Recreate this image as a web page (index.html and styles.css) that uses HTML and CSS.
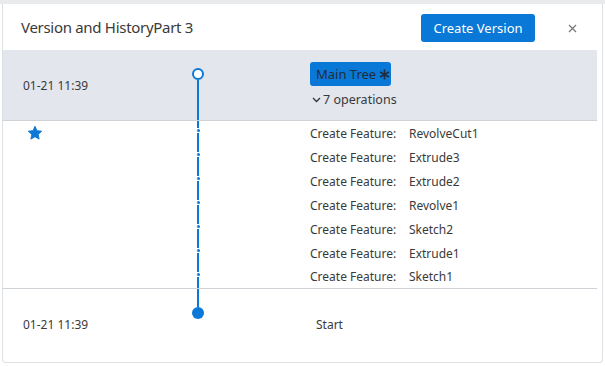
FILE: index.html
```html
<!DOCTYPE html>
<html>
<head>
<meta charset="utf-8">
<link rel="stylesheet" href="styles.css">
</head>
<body>
<div class="card">
  <div class="header">
    <div class="title">Version and HistoryPart 3</div>
    <button class="btn-primary">Create Version</button>
    <span class="close">
      <svg width="9" height="9" viewBox="0 0 9 9"><path d="M1 1L8 8M8 1L1 8" stroke="#777" stroke-width="1.2"/></svg>
    </span>
  </div>
  <div class="body">
    <div class="section current">
      <div class="date">01-21 11:39</div>
      <div class="tl">
        <span class="ring"></span>
        <span class="line"></span>
      </div>
      <div class="content">
        <span class="tag">Main Tree
          <svg class="ast" width="11" height="11" viewBox="0 0 12 12"><path d="M6 0.5V11.5M1.2 3.2L10.8 8.8M10.8 3.2L1.2 8.8" stroke="#1f2d3d" stroke-width="1.8"/></svg>
        </span>
        <div class="ops-toggle">
          <svg width="9" height="6" viewBox="0 0 9 6"><path d="M1 1L4.5 4.5L8 1" fill="none" stroke="#333" stroke-width="1.3"/></svg>
          <span>7 operations</span>
        </div>
      </div>
    </div>
    <div class="section ops">
      <div class="op-row">
        <div class="date star-cell">
          <svg width="14" height="14" viewBox="1 1 22 22"><path d="M12 1.5l3.1 6.9 7.4.8-5.6 5 1.6 7.4L12 17.8l-6.5 3.8 1.6-7.4-5.6-5 7.4-.8z" fill="#0a78d7" stroke="#0a78d7" stroke-width="1.5" stroke-linejoin="round"/></svg>
        </div>
        <div class="tl"><span class="seg top"></span><span class="dot"></span><span class="seg"></span></div>
        <div class="content op"><span class="op-label">Create Feature:</span><span>RevolveCut1</span></div>
      </div>
      <div class="op-row">
        <div class="date"></div>
        <div class="tl"><span class="seg top"></span><span class="dot"></span><span class="seg"></span></div>
        <div class="content op"><span class="op-label">Create Feature:</span><span>Extrude3</span></div>
      </div>
      <div class="op-row">
        <div class="date"></div>
        <div class="tl"><span class="seg top"></span><span class="dot"></span><span class="seg"></span></div>
        <div class="content op"><span class="op-label">Create Feature:</span><span>Extrude2</span></div>
      </div>
      <div class="op-row">
        <div class="date"></div>
        <div class="tl"><span class="seg top"></span><span class="dot"></span><span class="seg"></span></div>
        <div class="content op"><span class="op-label">Create Feature:</span><span>Revolve1</span></div>
      </div>
      <div class="op-row">
        <div class="date"></div>
        <div class="tl"><span class="seg top"></span><span class="dot"></span><span class="seg"></span></div>
        <div class="content op"><span class="op-label">Create Feature:</span><span>Sketch2</span></div>
      </div>
      <div class="op-row">
        <div class="date"></div>
        <div class="tl"><span class="seg top"></span><span class="dot"></span><span class="seg"></span></div>
        <div class="content op"><span class="op-label">Create Feature:</span><span>Extrude1</span></div>
      </div>
      <div class="op-row last">
        <div class="date"></div>
        <div class="tl"><span class="seg top"></span><span class="dot"></span><span class="seg"></span></div>
        <div class="content op"><span class="op-label">Create Feature:</span><span>Sketch1</span></div>
      </div>
    </div>
    <div class="section start">
      <div class="date">01-21 11:39</div>
      <div class="tl">
        <span class="line short"></span>
        <span class="fill-dot"></span>
      </div>
      <div class="content start-text">Start</div>
    </div>
  </div>
</div>
</body>
</html>
```

FILE: styles.css
```css
* { box-sizing: border-box; }
html, body { margin: 0; padding: 0; }
body {
  background: #fff;
  border-top: 4px solid #e9eaec;
  font-family: "Noto Sans", "Open Sans", sans-serif;
  color: #3a3a3a;
  width: 605px;
  height: 366px;
  overflow: hidden;
}
.card {
  margin-left: 2px;
  width: 601px;
  height: 359px;
  border: 1px solid #dcdfe3;
  border-top: none;
  border-radius: 0 0 4px 4px;
  display: flex;
  flex-direction: column;
  padding-right: 5px;
}
.header {
  height: 46px;
  flex: none;
  display: flex;
  align-items: center;
  padding-left: 18px;
}
.title {
  font-size: 15px;
  color: #3a3a3a;
  flex: 1;
  letter-spacing: -0.3px;
}
.btn-primary {
  width: 114px;
  height: 28px;
  background: #0a78d7;
  color: #fff;
  border: none;
  border-radius: 3px;
  font-family: inherit;
  font-size: 13px;
  padding: 0;
  margin-top: 2px;
}
.close {
  width: 62px;
  display: flex;
  justify-content: center;
  padding-left: 12px;
  padding-top: 2px;
}
.body {
  flex: 1;
  display: flex;
  flex-direction: column;
}
.section, .op-row {
  display: flex;
}
.date {
  width: 175px;
  padding-left: 20px;
  font-size: 12px;
  color: #3a3a3a;
}
.tl {
  width: 40px;
  display: flex;
  flex-direction: column;
  align-items: center;
}
.content {
  padding-left: 92px;
  flex: 1;
}
.current {
  height: 71px;
  flex: none;
  background: #e3e6ed;
  border-bottom: 1px solid #cfd2d6;
}
.current .date {
  align-self: center;
}
.current .tl {
  padding-top: 18px;
}
.ring {
  width: 12px;
  height: 12px;
  border: 2px solid #0a78d7;
  border-radius: 50%;
  background: #fff;
  flex: none;
}
.line {
  width: 2px;
  flex: 1;
  background: #0a78d7;
}
.current .content {
  padding-top: 12px;
}
.tag {
  display: inline-flex;
  align-items: center;
  gap: 3px;
  height: 24px;
  width: 81px;
  padding-left: 6px;
  background: #0a78d7;
  border-radius: 3px;
  font-size: 13px;
  color: #1f2d3d;
}
.ops-toggle {
  margin-top: 5px;
  display: flex;
  align-items: center;
  gap: 2px;
  padding-left: 2px;
  font-size: 12.5px;
  color: #3a3a3a;
}
.ops {
  flex: none;
  flex-direction: column;
  border-bottom: 1px solid #cfd2d6;
}
.op-row {
  height: 24px;
}
.op-row.last {
  height: 23px;
}
.star-cell {
  padding-left: 25px;
  padding-top: 5px;
}
.seg {
  width: 2px;
  flex: 1;
  background: #0a78d7;
}
.seg.top {
  flex: none;
  height: 7px;
  margin-bottom: 1px;
}
.dot {
  width: 3px;
  height: 3px;
  border-radius: 50%;
  background: #0a78d7;
  margin-bottom: 1px;
}
.op {
  display: flex;
  align-items: center;
  font-size: 12px;
  color: #3a3a3a;
}
.op-label {
  width: 99px;
}
.start {
  flex: 1;
}
.start .date {
  padding-top: 27px;
}
.short {
  flex: none;
  height: 18px;
}
.fill-dot {
  width: 12px;
  height: 12px;
  border-radius: 50%;
  background: #0a78d7;
}
.start-text {
  padding-left: 98px;
  padding-top: 27px;
  font-size: 12px;
}
```
